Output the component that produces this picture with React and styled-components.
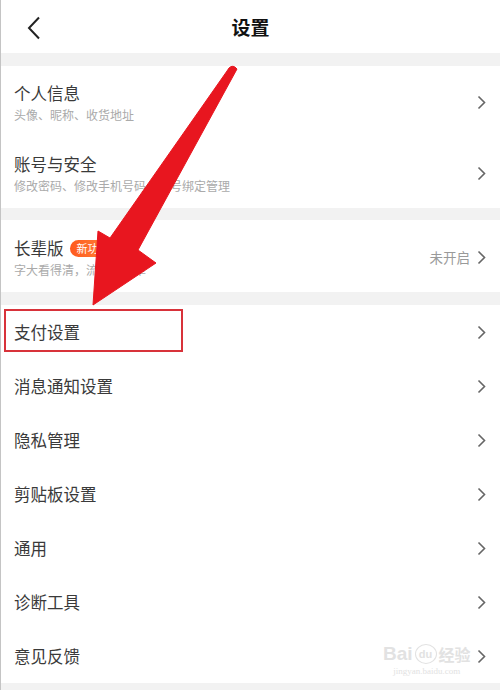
import styled, { createGlobalStyle } from "styled-components";

const Global = createGlobalStyle`
  html, body {
    margin: 0;
    padding: 0;
    background: #f2f2f2;
  }
  body {
    font-family: "Noto Sans CJK SC", "Noto Sans", sans-serif;
  }
`;

const Page = styled.div`
  position: relative;
  width: 500px;
  height: 690px;
  overflow: hidden;
  background: #f2f2f2;
  border-left: 1px solid #c4c4c4;
  box-sizing: border-box;
`;

const Header = styled.header`
  position: relative;
  height: 53px;
  background: #fff;
  display: flex;
  align-items: center;
  justify-content: center;
  margin-bottom: 13px;
`;

const Back = styled.svg`
  position: absolute;
  left: 26px;
  top: 16px;
`;

const Title = styled.h1`
  margin: 0;
  font-size: 19px;
  font-weight: 700;
  color: #111;
`;

const Section = styled.section`
  background: #fff;
  margin-bottom: ${(p) => p.$gap || 0}px;
`;

const Row = styled.div`
  position: relative;
  display: flex;
  align-items: ${(p) => (p.$pt ? "flex-start" : "center")};
  height: ${(p) => p.$h}px;
  box-sizing: border-box;
  padding: ${(p) => (p.$pt ? `${p.$pt}px 14px 0 13px` : "0 14px 0 13px")};
`;

const Texts = styled.div`
  flex: 1;
  display: flex;
  flex-direction: column;
  gap: 3px;
`;

const Label = styled.div`
  display: flex;
  align-items: center;
  gap: 6px;
  font-size: 16.5px;
  line-height: 22px;
  color: #3a3a3a;
`;

const Sub = styled.div`
  font-size: 12px;
  line-height: 16px;
  color: #aaa;
`;

const Badge = styled.span`
  display: inline-block;
  height: 17px;
  line-height: 17px;
  padding: 0 7px;
  border-radius: 9px;
  font-size: 11px;
  color: #fff;
  background: linear-gradient(90deg, #ff5a1f, #ff8a3c);
`;

const Right = styled.div`
  display: flex;
  align-items: center;
  gap: 7px;
  align-self: center;
  margin-top: ${(p) => (p.$pt ? -p.$pt + 2 : 0)}px;
  font-size: 13.5px;
  color: #9a9a9a;
`;

const Highlight = styled.div`
  position: absolute;
  left: 3px;
  top: 4px;
  width: 179px;
  height: 43px;
  border: 2px solid #d8323a;
  box-sizing: border-box;
  pointer-events: none;
`;

const Overlay = styled.svg`
  position: absolute;
  left: 0;
  top: 0;
  pointer-events: none;
`;

const Watermark = styled.div`
  position: absolute;
  left: 382px;
  top: 643px;
  display: flex;
  flex-direction: column;
  align-items: center;
  color: #e2e2e2;
  pointer-events: none;
`;

const MarkTop = styled.div`
  display: flex;
  align-items: center;
  gap: 2px;
  font-family: "Liberation Sans", sans-serif;
  font-size: 19px;
  font-weight: 700;
  line-height: 22px;
`;

const Du = styled.span`
  display: inline-block;
  border: 1.5px solid #e2e2e2;
  border-radius: 50%;
  width: 20px;
  height: 18px;
  line-height: 18px;
  font-size: 11px;
  text-align: center;
`;

const MarkCn = styled.span`
  font-family: "Noto Sans CJK SC", sans-serif;
  font-size: 16px;
  font-weight: 700;
`;

const MarkUrl = styled.div`
  font-family: "Liberation Serif", serif;
  font-size: 9px;
  line-height: 12px;
`;

function Chevron() {
  return (
    <svg width="9" height="15" viewBox="0 0 9 15">
      <path d="M1.5 1.5l6 6-6 6" fill="none" stroke="#666" strokeWidth="1.6" />
    </svg>
  );
}

const section3 = ["支付设置", "消息通知设置", "隐私管理", "剪贴板设置", "通用", "诊断工具", "意见反馈"];

export default function App() {
  return (
    <Page>
      <Global />
      <Header>
        <Back width="14" height="24" viewBox="0 0 14 24">
          <path d="M12 1.5L2 12l10 10.5" fill="none" stroke="#222" strokeWidth="2" />
        </Back>
        <Title>设置</Title>
      </Header>

      <Section $gap={12}>
        <Row $h={71} $pt={16}>
          <Texts>
            <Label>个人信息</Label>
            <Sub>头像、昵称、收货地址</Sub>
          </Texts>
          <Right $pt={16}>
            <Chevron />
          </Right>
        </Row>
        <Row $h={71} $pt={16}>
          <Texts>
            <Label>账号与安全</Label>
            <Sub>修改密码、修改手机号码、账号绑定管理</Sub>
          </Texts>
          <Right $pt={16}>
            <Chevron />
          </Right>
        </Row>
      </Section>

      <Section $gap={13}>
        <Row $h={72} $pt={17}>
          <Texts>
            <Label>
              长辈版<Badge>新功能</Badge>
            </Label>
            <Sub>字大看得清，流程更简单</Sub>
          </Texts>
          <Right $pt={17}>
            未开启
            <Chevron />
          </Right>
        </Row>
      </Section>

      <Section>
        {section3.map((t, i) => (
          <Row key={t} $h={54}>
            <Texts>
              <Label>{t}</Label>
            </Texts>
            <Right>
              <Chevron />
            </Right>
            {i === 0 && <Highlight />}
          </Row>
        ))}
      </Section>

      <Watermark>
        <MarkTop>
          Bai<Du>du</Du>
          <MarkCn>经验</MarkCn>
        </MarkTop>
        <MarkUrl>jingyan.baidu.com</MarkUrl>
      </Watermark>

      <Overlay width="500" height="690" viewBox="0 0 500 690">
        <path
          d="M228 68 Q232 64 236 69 L137 250 L155 263 L92 305 L97 231 L109 238 L226 71 Z"
          fill="#e8161f"
          stroke="#e8161f"
          strokeWidth="1"
          strokeLinejoin="round"
        />
      </Overlay>
    </Page>
  );
}
